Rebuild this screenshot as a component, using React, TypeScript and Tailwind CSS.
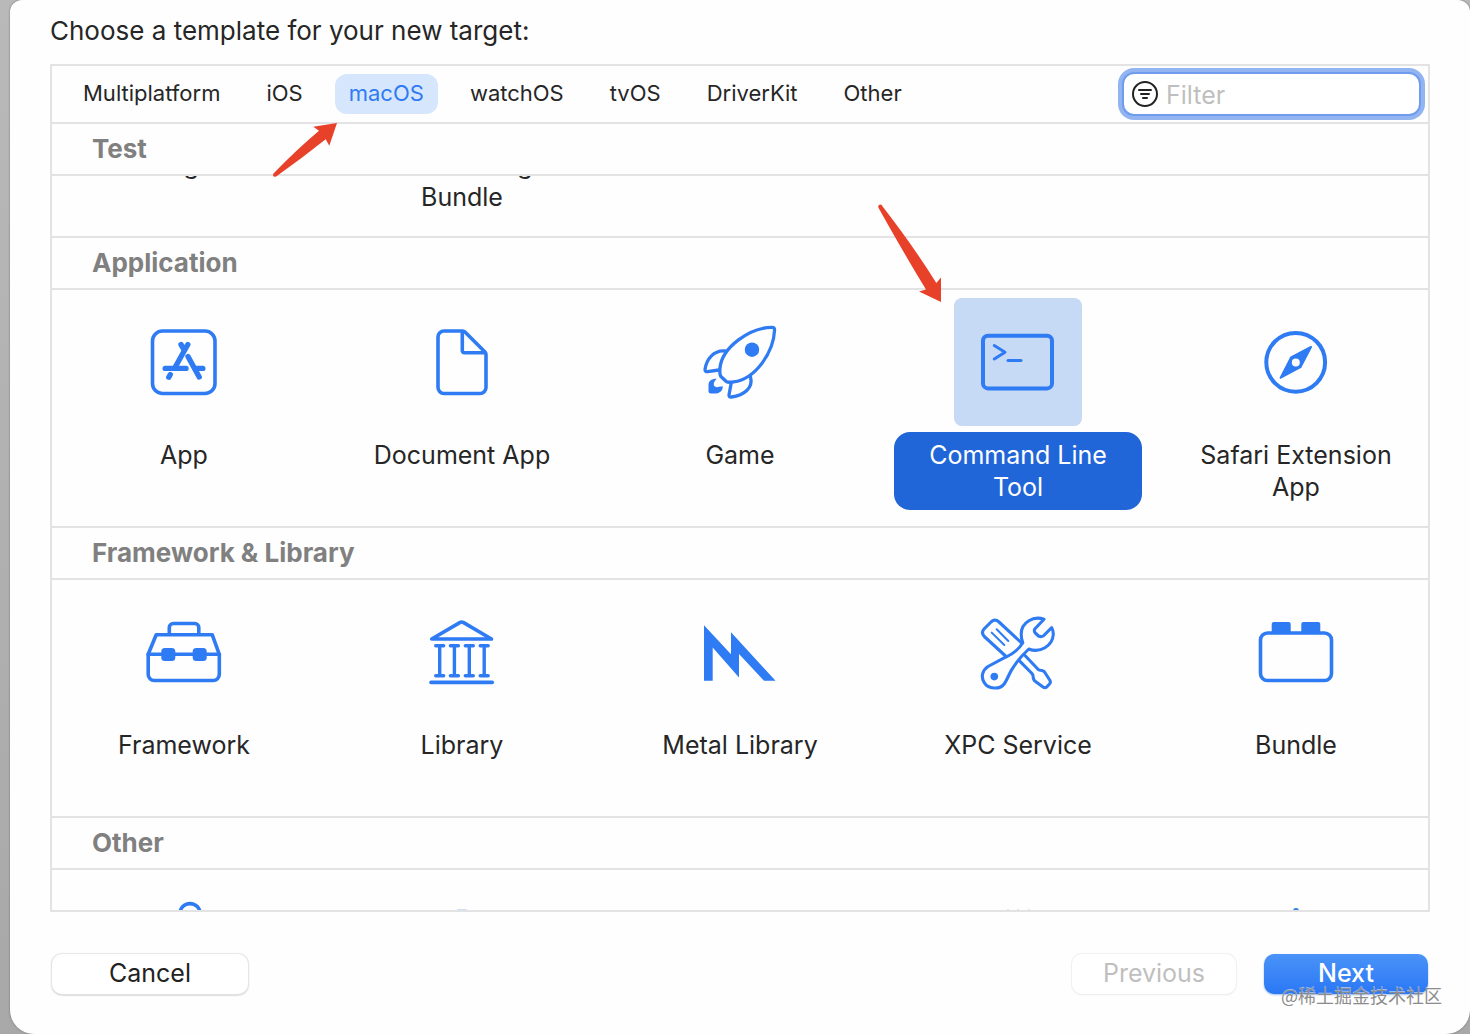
import { useState } from 'react';
import type { ReactNode } from 'react';
import clsx from 'clsx';

type Template = {
    name: string;
    icon: ReactNode;
};

const platforms = ['Multiplatform', 'iOS', 'macOS', 'watchOS', 'tvOS', 'DriverKit', 'Other'];

// All template icons share a 128x128 box, same size as the selection tile
function TemplateIcon({ children }: { children: ReactNode }) {
    return (
        <svg
            viewBox="0 0 128 128"
            className="w-32 h-32 text-[#2f7bf3]"
            fill="none"
            stroke="currentColor"
            strokeWidth="3.6"
            strokeLinecap="round"
            strokeLinejoin="round"
            aria-hidden="true"
        >
            {children}
        </svg>
    );
}

const AppIcon = () => (
    <TemplateIcon>
        <rect x="32.5" y="33" width="62.5" height="62.5" rx="10" />
        <g strokeWidth="5.4">
            <path d="M67.8 46.5 55 69.5" />
            <path d="M61 46.5 64 51.5" />
            <path d="M45.2 70.4H66" />
            <path d="M68 58.5 79.2 79" />
            <path d="M76 70.4H82.8" />
            <path d="M50.3 76.5 48.8 79.2" />
        </g>
    </TemplateIcon>
);

const DocumentIcon = () => (
    <TemplateIcon>
        <path d="M46 33H64.5Q66 33 67 34L87 54Q88 55 88 56.5V89.5A6 6 0 0 1 82 95.5H46A6 6 0 0 1 40 89.5V39A6 6 0 0 1 46 33Z" />
        <path d="M64.3 33.5V52.5A2 2 0 0 0 66.3 54.7H87" />
    </TemplateIcon>
);

const RocketIcon = () => (
    <TemplateIcon>
        <g strokeWidth="3.3">
            <path d="M98.6 32Q98.6 29.3 96 29.3C74 29.5 46 49 44 70C43.6 74 43.9 77 44.9 78.5L50 83.3C51.5 84.3 54 84.5 57.5 83.9C80 81 97.5 54 98.6 32Z" />
            <path d="M49 53C38 52 30.5 61 29 71.5Q29 73.9 31.5 73.7L43 72" />
            <path d="M55.2 85 53 97Q52.8 99.4 55.4 99C68 97.2 77.5 90 74.5 79" />
        </g>
        <circle cx="76" cy="51.7" r="7.2" fill="currentColor" stroke="none" />
        <path
            d="M40.5 80.8C35 80.8 32.5 83.5 32.5 87V93.5Q32.5 95.6 35 95.6H38C43.5 95.6 46.8 93.5 46.8 88.3L43.2 88.8C39.5 90 37 88 38 84.8C38.3 83.2 39.8 82.2 40.5 80.8Z"
            fill="currentColor"
            stroke="none"
        />
    </TemplateIcon>
);

const TerminalIcon = () => (
    <TemplateIcon>
        <rect x="29" y="37.7" width="69" height="52.7" rx="5" strokeWidth="4" />
        <path d="M40.3 47.5 51 54.3 40.3 61" strokeWidth="3" />
        <path d="M54 62.4H67" strokeWidth="3" />
    </TemplateIcon>
);

const CompassIcon = () => (
    <TemplateIcon>
        <circle cx="63.7" cy="64.3" r="29.4" strokeWidth="4" />
        <path
            d="M80 48 68.9 69.6 47.7 80.7 58.6 59ZM63.8 60.4A4 4 0 1 0 63.8 68.4 4 4 0 1 0 63.8 60.4Z"
            fill="currentColor"
            fillRule="evenodd"
            stroke="none"
        />
        <path d="M79 49 68.4 69.2 48.7 79.7 59.1 59.5Z" strokeWidth="2" />
    </TemplateIcon>
);

const ToolboxIcon = () => (
    <TemplateIcon>
        <path d="M28.2 66.3 36.2 46.7H92.2L99.3 66.3V86.5A6 6 0 0 1 93.3 92.5H34.2A6 6 0 0 1 28.2 86.5Z" />
        <path d="M28.2 66.3H99.3" />
        <path d="M49.3 46V39.5A4 4 0 0 1 53.3 35.5H74.8A4 4 0 0 1 78.8 39.5V46" />
        <rect x="41.3" y="60" width="14" height="13" rx="3.5" fill="currentColor" stroke="none" />
        <rect x="72.7" y="60" width="14" height="13" rx="3.5" fill="currentColor" stroke="none" />
    </TemplateIcon>
);

const LibraryIcon = () => (
    <TemplateIcon>
        <path d="M62.2 34.4Q63.7 33.6 65.2 34.4L93.5 51H33.7Z" />
        {[41.7, 56.4, 71.3, 86.2].map((x) => (
            <path key={x} d={`M${x - 4} 57.7H${x + 4}M${x} 57.7V87.7M${x - 4} 87.7H${x + 4}`} strokeWidth="3.4" />
        ))}
        <path d="M33 94.4H94.3" />
    </TemplateIcon>
);

const MetalIcon = () => (
    <TemplateIcon>
        <path
            d="M28 37.3 55 66.3V44.3L99.5 92.7H88L63 66V89.5L36.7 59.5V92.7H28Z"
            fill="currentColor"
            stroke="none"
        />
    </TemplateIcon>
);

const ToolsIcon = () => (
    <TemplateIcon>
        <g strokeWidth="3.1">
            <path d="M51 67.5 30.3 48.5Q26.8 44.5 30 41L37 34Q41 30.3 45 34L68 55.3" />
            <path d="M42.7 41.3 54.3 53M37.7 44.6 50.3 57" strokeWidth="2" />
            <path d="M90 31.3C80 27.5 67.2 34 67.2 46C67.2 50 68 53 68.8 54.8C65 61 59 66 51.5 69.2L34 78.5C28 82.5 27 89 30 94.3C34 101.5 46 102 50.5 95.5C54.5 89.5 55.5 84 59.5 79C63.5 72.5 69 66.5 74.8 61C86 65.5 98.5 58 99.3 46.5Q99.4 42.5 97.7 39.7L89.3 48Q87 49.2 84.5 48L81.3 45Q79.5 42.7 81 40.7Z" />
            <path d="M71 67.5 83.3 80.5Q84.5 82.5 88 82.5Q90.5 83 91.5 85.5L96 92.5Q97 94.5 95.5 96L92.8 98.8Q91 100.5 89 99L81.5 93.5Q79.2 92 79.2 89Q79.3 86.5 77.5 85L65.5 72.8" />
        </g>
        <circle cx="40.3" cy="88.6" r="3.8" fill="currentColor" stroke="none" />
    </TemplateIcon>
);

const BrickIcon = () => (
    <TemplateIcon>
        <rect x="28.5" y="45" width="71" height="47.5" rx="7" />
        <path
            d="M39.7 45V36Q39.7 34 41.7 34H56.7Q58.7 34 58.7 36V45ZM69.3 45V36Q69.3 34 71.3 34H86.3Q88.3 34 88.3 36V45Z"
            fill="currentColor"
            stroke="none"
        />
    </TemplateIcon>
);

const applicationTemplates: Template[] = [
    { name: 'App', icon: <AppIcon /> },
    { name: 'Document App', icon: <DocumentIcon /> },
    { name: 'Game', icon: <RocketIcon /> },
    { name: 'Command Line Tool', icon: <TerminalIcon /> },
    { name: 'Safari Extension App', icon: <CompassIcon /> },
];

const libraryTemplates: Template[] = [
    { name: 'Framework', icon: <ToolboxIcon /> },
    { name: 'Library', icon: <LibraryIcon /> },
    { name: 'Metal Library', icon: <MetalIcon /> },
    { name: 'XPC Service', icon: <ToolsIcon /> },
    { name: 'Bundle', icon: <BrickIcon /> },
];

function SectionTitle({ children }: { children: ReactNode }) {
    return (
        <h2 className="h-[54px] flex items-center border-y-2 border-[#e3e3e3] px-10 text-[26px] leading-8 font-bold text-[#808080]">
            {children}
        </h2>
    );
}

function TemplateGrid({
    templates,
    selected,
    onSelect,
}: {
    templates: Template[];
    selected: string;
    onSelect: (name: string) => void;
}) {
    return (
        <div className="grid grid-cols-5 gap-x-[30px] px-2 pt-2 pb-4">
            {templates.map(({ name, icon }) => {
                const active = name === selected;
                return (
                    <button
                        key={name}
                        type="button"
                        aria-pressed={active}
                        onClick={() => onSelect(name)}
                        className="min-h-[212px] flex flex-col items-center justify-start gap-1.5"
                    >
                        <span className={clsx('relative rounded-lg', active && 'bg-[#c6d9f5]')}>
                            {icon}
                            {name === 'Command Line Tool' && (
                                <svg viewBox="0 0 64 98" className="absolute right-full bottom-full w-16 h-[98px] mr-3 -mb-1" aria-hidden="true">
                                    <path d="M0.6 4Q-0.500 1.500 1.500 0.700Q3.500 0 5 3Q36 43 58.300 79L63 73.500V98L41 87.500 48 85.500Q28 53 0.600 4Z" fill="#e8412a" />
                                </svg>
                            )}
                        </span>
                        <span
                            className={clsx(
                                'w-full rounded-2xl px-6 py-[7px] text-[25px] leading-8',
                                active ? 'bg-[#2166d8] text-white' : 'text-[#262626]'
                            )}
                        >
                            {name}
                        </span>
                    </button>
                );
            })}
        </div>
    );
}

export default function App() {
    const [platform, setPlatform] = useState('macOS');
    const [template, setTemplate] = useState('Command Line Tool');
    const [filter, setFilter] = useState('');

    return (
        <div className="min-h-screen bg-linear-to-b from-[#b9b9b9] to-[#a8a8a8] pl-2.5 font-['Inter',sans-serif] antialiased">
            <main className="relative min-h-screen rounded-t-xl rounded-b-3xl bg-[#fefefe] px-10 pt-[15px] pb-10 shadow-[0_0_2px_#666666]">
                <h1 className="mb-[17px] text-[26px] leading-8 text-[#262626]">Choose a template for your new target:</h1>

                <div className="border-2 border-[#e3e3e3]">
                    {/* Platform tabs and filter */}
                    <div className="h-14 flex items-center justify-between pl-[17px] pr-[7px]">
                        <nav className="flex gap-[18px]">
                            {platforms.map((name) => (
                                <button
                                    key={name}
                                    type="button"
                                    onClick={() => setPlatform(name)}
                                    className={clsx(
                                        'relative h-10 rounded-xl px-3.5 pb-0.5 text-[22px] leading-8',
                                        name === platform ? 'bg-[#d6e6fd] text-[#2f7bf3]' : 'text-[#262626]'
                                    )}
                                >
                                    {name}
                                    {name === 'macOS' && (
                                        <svg viewBox="0 0 64 54" className="absolute right-full top-full z-10 w-16 h-[54px] -mr-0.5 mt-[9px]" aria-hidden="true">
                                            <path d="M64 0 56.300 22.700 52.700 16.300Q28 36 3.500 53.300Q1 54.500 0.300 53Q-0.500 51.500 1 50Q22 28 46 7.700L40.300 3.700Z" fill="#e8412a" />
                                        </svg>
                                    )}
                                </button>
                            ))}
                        </nav>

                        <label className="h-11 w-[299px] flex items-center gap-2 rounded-xl border-2 border-[#6f9cec] bg-white px-2 ring-4 ring-[#92b5f2]">
                            <svg
                                viewBox="0 0 26 26"
                                className="w-[26px] h-[26px] shrink-0 text-[#222222]"
                                fill="none"
                                stroke="currentColor"
                                strokeWidth="2"
                                strokeLinecap="round"
                                aria-hidden="true"
                            >
                                <circle cx="13" cy="13" r="12" />
                                <path d="M7 9H19M9 13H17M11 17H15" />
                            </svg>
                            <input
                                type="text"
                                aria-label="Filter"
                                placeholder="Filter"
                                value={filter}
                                onChange={(e) => setFilter(e.target.value)}
                                className="min-w-0 flex-1 bg-transparent pt-0.5 text-[25px] leading-8 text-[#262626] placeholder:text-[#bfbfbf] outline-none"
                            />
                        </label>
                    </div>

                    {/* Scrolled so that only the end of the Test section shows */}
                    <section>
                        <SectionTitle>Test</SectionTitle>
                        <div className="h-[60px] flex flex-col justify-end overflow-hidden">
                            <div className="grid grid-cols-5 gap-x-[30px] px-2 pb-[23px] text-center text-[25px] leading-8 text-[#262626]">
                                <p className="whitespace-nowrap">UI Testing Bundle</p>
                                <p>
                                    Unit Testing
                                    <br />
                                    Bundle
                                </p>
                            </div>
                        </div>
                    </section>

                    <section>
                        <SectionTitle>Application</SectionTitle>
                        <TemplateGrid templates={applicationTemplates} selected={template} onSelect={setTemplate} />
                    </section>

                    <section>
                        <SectionTitle>Framework &amp; Library</SectionTitle>
                        <TemplateGrid templates={libraryTemplates} selected={template} onSelect={setTemplate} />
                    </section>

                    <section>
                        <SectionTitle>Other</SectionTitle>
                        <div className="h-10 overflow-hidden grid grid-cols-5 gap-x-[30px] justify-items-center px-2 pt-2">
                            <TemplateIcon>
                                <circle cx="70" cy="35.8" r="10.2" />
                            </TemplateIcon>
                            <TemplateIcon>
                                <path d="M60 33H68" strokeWidth="3" opacity="0.5" />
                            </TemplateIcon>
                            <span />
                            <TemplateIcon>
                                <path d="M54 33.500V34M64 33.500V34M75 33.500V34" strokeWidth="4" opacity="0.5" />
                            </TemplateIcon>
                            <TemplateIcon>
                                <circle cx="64" cy="33" r="3" fill="currentColor" stroke="none" />
                            </TemplateIcon>
                        </div>
                    </section>
                </div>

                {/* Dialog buttons */}
                <div className="mt-[42px] flex items-center gap-7 px-0.5 text-[25px] leading-8">
                    <button type="button" className="h-10 w-[196px] mr-auto rounded-[10px] bg-white pb-0.5 text-[#222222] shadow-[0_0_1px_1px_#e6e6e6,0_1px_2px_#999999]">
                        Cancel
                    </button>
                    <button type="button" disabled className="h-10 w-[164px] rounded-[10px] bg-white pb-0.5 text-[#bfbfbf] shadow-[0_0_1px_1px_#f0f0f0,0_1px_1px_#dddddd]">
                        Previous
                    </button>
                    <button type="button" className="h-10 w-[164px] rounded-[10px] bg-linear-to-b from-[#4a93f8] to-[#2a77f5] pb-0.5 font-medium text-white shadow-[0_1px_2px_#9dbcf0]">
                        Next
                    </button>
                </div>

                <span className="absolute right-7 bottom-[25px] font-['Noto_Sans_CJK_SC',sans-serif] text-[18px] leading-7 text-[#8c8c8c] [text-shadow:0_-1px_0_#ffffff80]">
                    @稀土掘金技术社区
                </span>
            </main>
        </div>
    );
}
